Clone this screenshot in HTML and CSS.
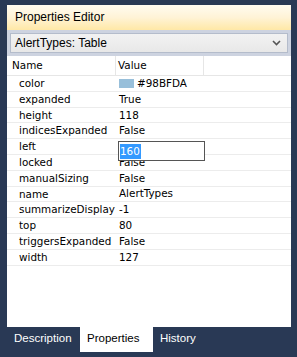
FILE: index.html
```html
<!DOCTYPE html>
<html lang="en">

<head>
    <meta charset="UTF-8">
    <title>Properties Editor</title>
    <link rel="stylesheet" href="styles.css">
</head>

<body>
    <section class="panel">
        <div class="panel-title">Properties Editor</div>

        <div class="picker">
            <div class="select">
                <span>AlertTypes: Table</span>
                <svg class="chevron" width="9" height="6" viewBox="0 0 9 6">
                    <path d="M1 1 L4.5 4.5 L8 1" fill="none" stroke="#555" stroke-width="1.6"/>
                </svg>
            </div>
        </div>

        <div class="grid">
            <div class="grid-head">
                <div class="col-name">Name</div>
                <div class="col-value">Value</div>
                <div class="col-rest"></div>
            </div>

            <div class="row">
                <div class="cell-name">color</div>
                <div class="cell-value"><span class="swatch"></span>#98BFDA</div>
            </div>
            <div class="row">
                <div class="cell-name">expanded</div>
                <div class="cell-value">True</div>
            </div>
            <div class="row">
                <div class="cell-name">height</div>
                <div class="cell-value">118</div>
            </div>
            <div class="row">
                <div class="cell-name">indicesExpanded</div>
                <div class="cell-value">False</div>
            </div>
            <div class="row">
                <div class="cell-name">left</div>
                <div class="cell-value">
                    <div class="editor"><span class="selected">160</span></div>
                </div>
            </div>
            <div class="row">
                <div class="cell-name">locked</div>
                <div class="cell-value">False</div>
            </div>
            <div class="row">
                <div class="cell-name">manualSizing</div>
                <div class="cell-value">False</div>
            </div>
            <div class="row">
                <div class="cell-name">name</div>
                <div class="cell-value">AlertTypes</div>
            </div>
            <div class="row">
                <div class="cell-name">summarizeDisplay</div>
                <div class="cell-value">-1</div>
            </div>
            <div class="row">
                <div class="cell-name">top</div>
                <div class="cell-value">80</div>
            </div>
            <div class="row">
                <div class="cell-name">triggersExpanded</div>
                <div class="cell-value">False</div>
            </div>
            <div class="row">
                <div class="cell-name">width</div>
                <div class="cell-value">127</div>
            </div>
        </div>
    </section>

    <nav class="tabs">
        <div class="tab">Description</div>
        <div class="tab active">Properties</div>
        <div class="tab">History</div>
    </nav>
</body>

</html>
```

FILE: styles.css
```css
body {
    margin: 0;
    background: #293955;
    font-family: "Liberation Sans", Arial, sans-serif;
    width: 297px;
    height: 357px;
    overflow: hidden;
}

.panel {
    margin: 5px 6px 0 7px;
    height: 322px;
    background: #fff;
    display: flex;
    flex-direction: column;
}

.panel-title {
    height: 25px;
    line-height: 25px;
    padding-left: 8px;
    font-size: 12px;
    color: #000;
    background: linear-gradient(#fffbf0, #fff3d6 50%, #ffe8a6);
}

.picker {
    background: #cdd3e0;
    padding: 3px 3px 3px 3px;
}

.select {
    height: 20px;
    box-sizing: border-box;
    border: 1px solid #b4bccb;
    background: linear-gradient(#f2f2f2, #e8e8e8);
    display: flex;
    align-items: center;
    justify-content: space-between;
    padding: 0 6px 0 4px;
    font-size: 12px;
}

.grid {
    flex: 1;
    font-family: "DejaVu Sans", Verdana, sans-serif;
    font-size: 10.4px;
    color: #000;
}

.grid-head {
    display: flex;
    height: 20px;
    line-height: 18px;
    border-bottom: 1px solid #e6e6e6;
    box-sizing: border-box;
}

.col-name {
    width: 109px;
    padding-left: 5px;
    box-sizing: border-box;
    border-right: 1px solid #e6e6e6;
}

.col-value {
    width: 88px;
    padding-left: 2px;
    box-sizing: border-box;
    border-right: 1px solid #e6e6e6;
}

.row {
    display: flex;
    height: 15.8px;
    line-height: 15px;
    border-bottom: 1px solid #ececec;
    box-sizing: border-box;
}

.cell-name {
    width: 109px;
    padding-left: 12px;
    box-sizing: border-box;
    white-space: nowrap;
}

.cell-value {
    padding-left: 3px;
    position: relative;
    display: flex;
    align-items: center;
}

.swatch {
    width: 15px;
    height: 9px;
    background: #98bfda;
    margin-right: 3px;
}

.editor {
    position: absolute;
    left: 2px;
    top: 2px;
    width: 87px;
    height: 20px;
    box-sizing: border-box;
    border: 1px solid #555;
    background: #fff;
    padding: 2px 0 0 1px;
    line-height: 15px;
    z-index: 1;
}

.selected {
    background: #3399ff;
    color: #fff;
    display: inline-block;
    padding-right: 1px;
}

.tabs {
    display: flex;
    padding-left: 7px;
    height: 25px;
}

.tab {
    width: 73px;
    padding-left: 7px;
    box-sizing: border-box;
    line-height: 22px;
    font-size: 11.5px;
    color: #fff;
}

.tab.active {
    background: #fff;
    color: #000;
}
```
